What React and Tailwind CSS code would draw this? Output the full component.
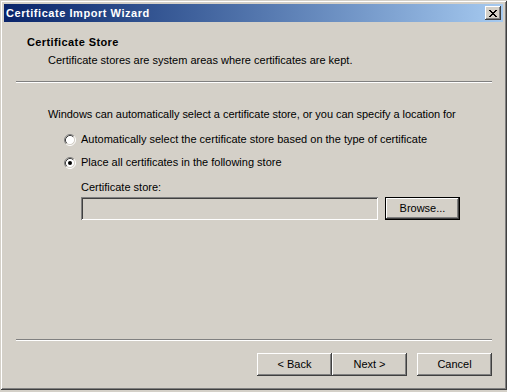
import React from 'react';

const face = 'bg-[#d4d0c8]';

// classic raised button bevel
const raised =
  'shadow-[inset_-1px_-1px_0_#404040,inset_1px_1px_0_#ffffff,inset_-2px_-2px_0_#808080,inset_2px_2px_0_#d4d0c8]';

function Button({ children, isDefault, className = '' }) {
  return (
    <div
      className={`w-[75px] h-[23px] ${face} flex items-center justify-center text-black ${
        isDefault ? 'border border-black' : ''
      } ${className}`}
    >
      <div className={`w-full h-full flex items-center justify-center ${raised}`}>{children}</div>
    </div>
  );
}

function Radio({ checked }) {
  return (
    <svg width="12" height="12" viewBox="0 0 12 12" className="shrink-0">
      <circle cx="6" cy="6" r="4.5" fill="#ffffff" />
      <path d="M2.11 9.89 A5.5 5.5 0 0 1 9.89 2.11" fill="none" stroke="#808080" strokeWidth="1" />
      <path d="M9.89 2.11 A5.5 5.5 0 0 1 2.11 9.89" fill="none" stroke="#ffffff" strokeWidth="1" />
      <path d="M2.82 9.18 A4.5 4.5 0 0 1 9.18 2.82" fill="none" stroke="#404040" strokeWidth="1" />
      <path d="M9.18 2.82 A4.5 4.5 0 0 1 2.82 9.18" fill="none" stroke="#d4d0c8" strokeWidth="1" />
      {checked && <circle cx="6" cy="6" r="2" fill="#000000" />}
    </svg>
  );
}

function CloseGlyph() {
  const px = [
    [0, 0], [1, 0], [6, 0], [7, 0],
    [1, 1], [2, 1], [5, 1], [6, 1],
    [2, 2], [3, 2], [4, 2], [5, 2],
    [3, 3], [4, 3],
    [2, 4], [3, 4], [4, 4], [5, 4],
    [1, 5], [2, 5], [5, 5], [6, 5],
    [0, 6], [1, 6], [6, 6], [7, 6],
  ];
  return (
    <svg width="8" height="7" viewBox="0 0 8 7" shapeRendering="crispEdges">
      {px.map(([x, y]) => (
        <rect key={`${x}-${y}`} x={x} y={y} width="1" height="1" fill="#000" />
      ))}
    </svg>
  );
}

function Separator({ className = '' }) {
  return (
    <div className={`ml-[12px] w-[476px] ${className}`}>
      <div className="h-px bg-[#808080]" />
      <div className="h-px bg-white" />
    </div>
  );
}

export default function App() {
  return (
    <div
      className={`w-[507px] h-[392px] ${face} text-[11px] leading-[13px] text-black`}
      style={{ fontFamily: '"Liberation Sans", Arial, sans-serif' }}
    >
      {/* Window frame */}
      <div className="w-[507px] h-[390px] p-[4px] shadow-[inset_1px_1px_0_#d4d0c8,inset_-1px_-1px_0_#404040,inset_2px_2px_0_#ffffff,inset_-2px_-2px_0_#808080]">
        {/* Title bar */}
        <div className="h-[18px] bg-gradient-to-r from-[#0a246a] to-[#a6caf0] flex items-center justify-between pl-[2px] pr-[2px]">
          <span className="font-bold text-white tracking-[0.55px]">Certificate Import Wizard</span>
          <div className={`w-[16px] h-[14px] ${face} ${raised} flex items-center justify-center`}>
            <CloseGlyph />
          </div>
        </div>

        {/* Header */}
        <div className="mt-[14px] pl-[23px] font-bold tracking-[0.4px]">Certificate Store</div>
        <div className="mt-[5px] pl-[44px]">Certificate stores are system areas where certificates are kept.</div>
        <Separator className="mt-[14px]" />

        {/* Body */}
        <div className="mt-[25px] pl-[44px] tracking-[-0.05px]">
          Windows can automatically select a certificate store, or you can specify a location for
        </div>
        <div className="mt-[12px] pl-[60px] flex items-start gap-[5px]">
          <div className="mt-[1px]">
            <Radio />
          </div>
          <span>Automatically select the certificate store based on the type of certificate</span>
        </div>
        <div className="mt-[10px] pl-[60px] flex items-start gap-[5px]">
          <div className="mt-[1px]">
            <Radio checked />
          </div>
          <span>Place all certificates in the following store</span>
        </div>
        <div className="mt-[12px] pl-[77px]">Certificate store:</div>
        <div className="mt-[3px] pl-[77px] flex items-center gap-[7px]">
          <div className="w-[297px] h-[23px] bg-[#d4d0c8] shadow-[inset_1px_1px_0_#808080,inset_-1px_-1px_0_#ffffff,inset_2px_2px_0_#404040,inset_-2px_-2px_0_#d4d0c8]" />
          <Button isDefault>Browse...</Button>
        </div>

        <Separator className="mt-[119px]" />

        {/* Footer buttons */}
        <div className="mt-[12px] pl-[253px] flex items-center">
          <Button>&lt; Back</Button>
          <Button>Next &gt;</Button>
          <Button className="ml-[10px]">Cancel</Button>
        </div>
      </div>
    </div>
  );
}
